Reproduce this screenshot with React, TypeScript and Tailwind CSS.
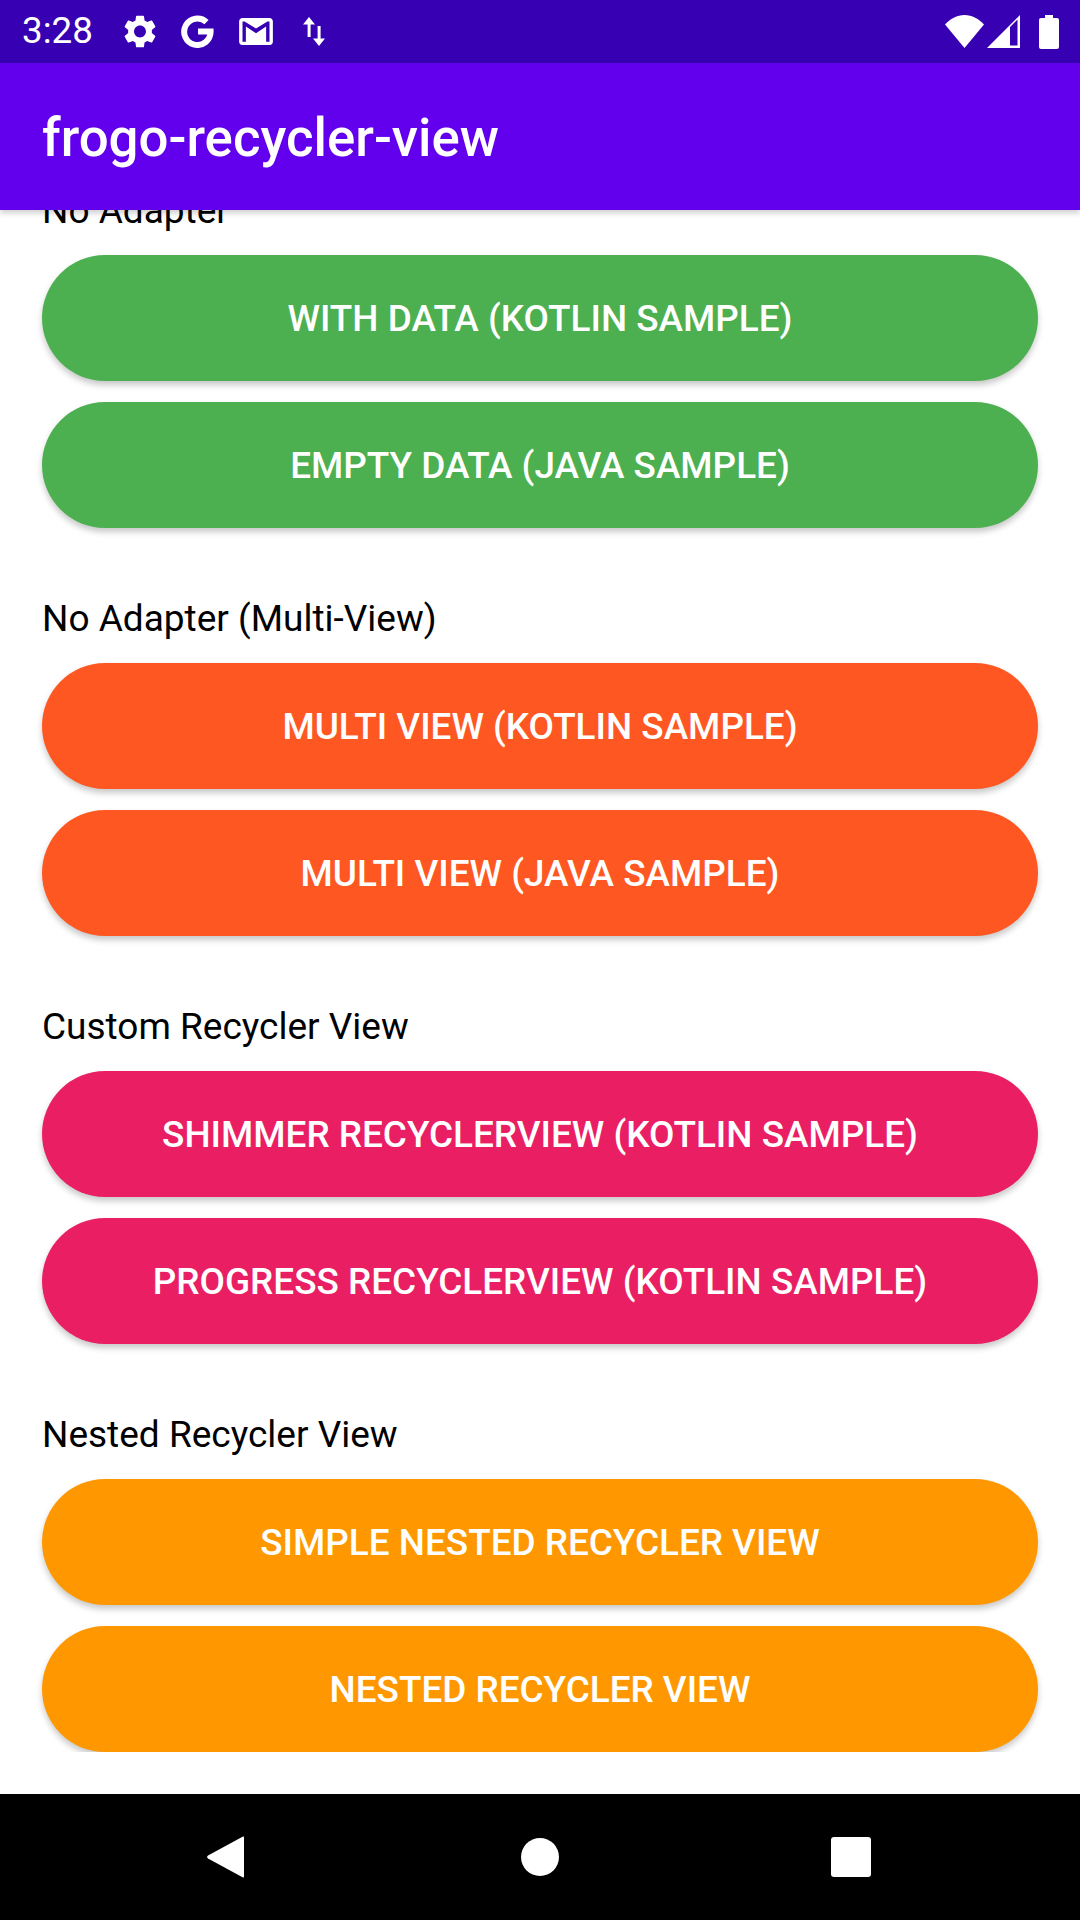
type Section = { title: string; color: string; buttons: string[] };

const sections: Section[] = [
  {
    title: "No Adapter",
    color: "bg-[#4caf50]",
    buttons: ["WITH DATA (KOTLIN SAMPLE)", "EMPTY DATA (JAVA SAMPLE)"],
  },
  {
    title: "No Adapter (Multi-View)",
    color: "bg-[#ff5722]",
    buttons: ["MULTI VIEW (KOTLIN SAMPLE)", "MULTI VIEW (JAVA SAMPLE)"],
  },
  {
    title: "Custom Recycler View",
    color: "bg-[#e91e63]",
    buttons: ["SHIMMER RECYCLERVIEW (KOTLIN SAMPLE)", "PROGRESS RECYCLERVIEW (KOTLIN SAMPLE)"],
  },
  {
    title: "Nested Recycler View",
    color: "bg-[#ff9800]",
    buttons: ["SIMPLE NESTED RECYCLER VIEW", "NESTED RECYCLER VIEW"],
  },
];

function GearIcon() {
  return (
    <svg viewBox="2.5 2 19 20" className="h-[33px] w-[32px] fill-white" aria-hidden>
      <path d="M19.14 12.94c.04-.3.06-.61.06-.94 0-.32-.02-.64-.07-.94l2.03-1.58c.18-.14.23-.41.12-.61l-1.92-3.32c-.12-.22-.37-.29-.59-.22l-2.39.96c-.5-.38-1.03-.7-1.62-.94l-.36-2.54c-.04-.24-.24-.41-.48-.41h-3.84c-.24 0-.43.17-.47.41l-.36 2.54c-.59.24-1.13.57-1.62.94l-2.39-.96c-.22-.08-.47 0-.59.22L2.74 8.87c-.12.21-.08.47.12.61l2.03 1.58c-.05.3-.09.63-.09.94s.02.64.07.94l-2.03 1.58c-.18.14-.23.41-.12.61l1.92 3.32c.12.22.37.29.59.22l2.39-.96c.5.38 1.03.7 1.62.94l.36 2.54c.05.24.24.41.48.41h3.84c.24 0 .44-.17.47-.41l.36-2.54c.59-.24 1.13-.56 1.62-.94l2.39.96c.22.08.47 0 .59-.22l1.92-3.32c.12-.22.07-.47-.12-.61l-2.01-1.58zM12 15.6c-1.98 0-3.6-1.62-3.6-3.6s1.62-3.6 3.6-3.6 3.6 1.62 3.6 3.6-1.62 3.6-3.6 3.6z" />
    </svg>
  );
}

function GoogleIcon() {
  return (
    <svg viewBox="0 0 33 33" className="h-[33px] w-[33px]" aria-hidden>
      <path
        d="M25.5 7.2A13.2 13.2 0 1 0 29.6 16.5H17"
        fill="none"
        stroke="white"
        strokeWidth="6"
      />
    </svg>
  );
}

function MailIcon() {
  return (
    <svg viewBox="2 4 20 16" className="h-[27px] w-[34px] fill-white" aria-hidden>
      <path d="M20 4H4c-1.1 0-2 .9-2 2v12c0 1.1.9 2 2 2h16c1.1 0 2-.9 2-2V6c0-1.1-.9-2-2-2zm0 14h-2V9l-6 4-6-4v9H4V6h1.2l6.8 4.25L18.8 6H20v12z" />
    </svg>
  );
}

function DataArrows() {
  return (
    <svg viewBox="0 0 22 29" className="h-[29px] w-[22px] fill-white" aria-hidden>
      <path d="M6 0L12 7.5H7.6V20H4.6V7.5H0Z" />
      <path d="M16 29L22 21.5H17.6V9H14.6V21.5H10Z" />
    </svg>
  );
}

function WifiIcon() {
  return (
    <svg viewBox="0 0 39 33" className="h-[33px] w-[39px] fill-white" aria-hidden>
      <path d="M19.5 33L0 9.5C5 4 12 0 19.5 0S34 4 39 9.5Z" />
    </svg>
  );
}

function SignalIcon() {
  return (
    <svg viewBox="0 0 33 33" className="h-[33px] w-[33px] fill-white" aria-hidden>
      <path fillRule="evenodd" d="M0 33L33 0V33ZM23 12L30.5 4.5V30.5H23Z" />
    </svg>
  );
}

function BatteryIcon() {
  return (
    <svg viewBox="0 0 20 34" className="h-[34px] w-[20px] fill-white" aria-hidden>
      <path d="M6 0H14V3H18A2 2 0 0 1 20 5V32A2 2 0 0 1 18 34H2A2 2 0 0 1 0 32V5A2 2 0 0 1 2 3H6Z" />
    </svg>
  );
}

function StatusBar() {
  return (
    <div className="flex h-[63px] shrink-0 items-center bg-[#3700b3] pl-[22px] pr-[21px] text-white">
      <span className="mr-[32px] w-[70px] text-[36.75px] leading-none">3:28</span>
      <div className="flex items-center gap-[25px]">
        <GearIcon />
        <GoogleIcon />
        <MailIcon />
        <div className="ml-[5px]">
          <DataArrows />
        </div>
      </div>
      <div className="ml-auto flex items-center">
        <WifiIcon />
        <div className="ml-[3px]">
          <SignalIcon />
        </div>
        <div className="ml-[19px]">
          <BatteryIcon />
        </div>
      </div>
    </div>
  );
}

function NavBar() {
  return (
    <div className="flex h-[126px] shrink-0 items-center justify-center gap-[272px] bg-black pr-[2px]">
      <svg viewBox="0 0 37 42" className="mr-[5px] h-[42px] w-[37px] fill-white" aria-hidden>
        <path d="M36 0.5C36.6 0.2 37 0.6 37 1.2V40.8C37 41.4 36.6 41.8 36 41.5L1 22.5C-0.2 21.8 -0.2 20.2 1 19.5Z" />
      </svg>
      <div className="h-[38px] w-[38px] rounded-full bg-white" />
      <div className="h-[40px] w-[40px] rounded-[3px] bg-white" />
    </div>
  );
}

export default function App() {
  return (
    <div className="flex h-[1920px] w-[1080px] flex-col overflow-hidden bg-white font-['Roboto',sans-serif]">
      <StatusBar />
      <header className="relative z-10 flex h-[147px] shrink-0 items-center bg-[#6200ee] pl-[42px] shadow-[0_3px_6px_rgba(0,0,0,0.2)]">
        <h1 className="relative top-[2px] text-[52.8px] font-medium leading-none text-white">frogo-recycler-view</h1>
      </header>
      <main className="min-h-0 flex-1 overflow-hidden">
        <div className="-mt-[19px] flex flex-col gap-[71px] px-[42px]">
          {sections.map((s) => (
            <section key={s.title}>
              <p className="mb-[21px] h-[43px] text-[37px] leading-[40px] text-black">{s.title}</p>
              <div className="flex flex-col gap-[21px]">
                {s.buttons.map((label) => (
                  <button
                    key={label}
                    className={`flex h-[126px] items-center justify-center rounded-[63px] pt-[2px] text-[36.9px] font-medium text-white shadow-[0_4px_6px_rgba(0,0,0,0.22)] ${s.color}`}
                  >
                    {label}
                  </button>
                ))}
              </div>
            </section>
          ))}
        </div>
      </main>
      <div className="h-[42px] shrink-0 bg-white" />
      <NavBar />
    </div>
  );
}
